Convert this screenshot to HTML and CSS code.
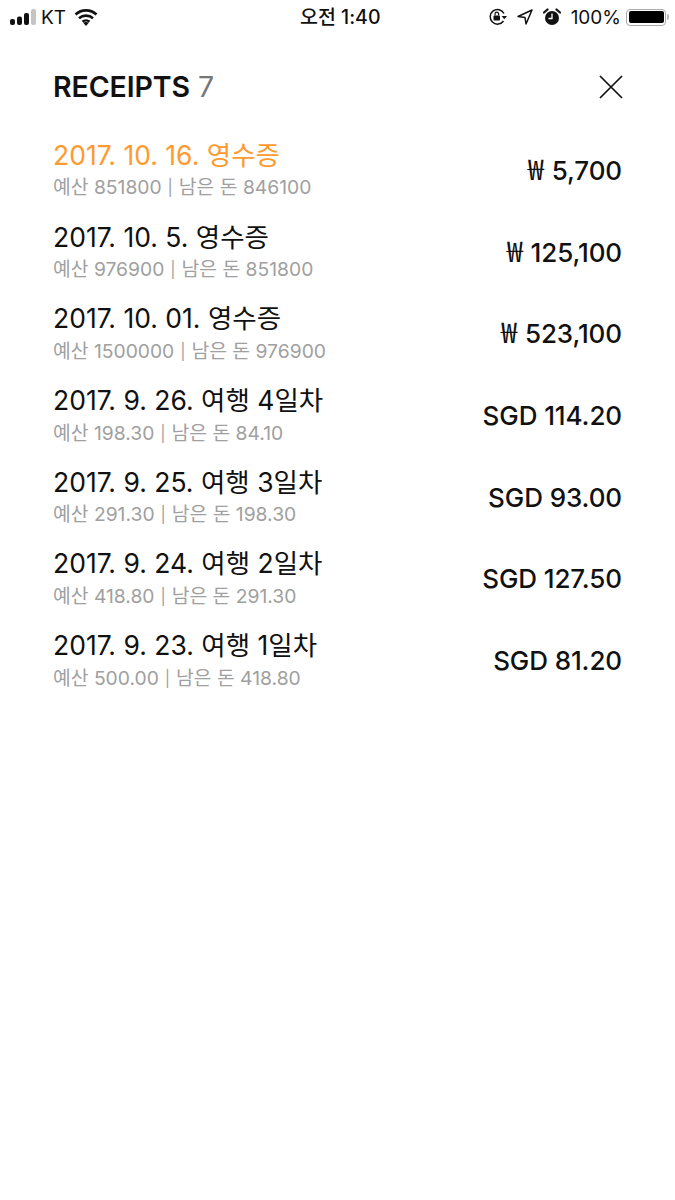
FILE: index.html
```html
<!DOCTYPE html>
<html lang="ko">
<head>
<meta charset="utf-8">
<title>Receipts</title>
<link rel="stylesheet" href="styles.css">
</head>
<body>
<div class="status">
  <div class="st-left">
    <svg class="signal" width="26" height="16" viewBox="0 0 26 16"><rect x="0" y="10" width="5" height="6" rx="2" fill="#111"/><rect x="7" y="7.500" width="5" height="8.500" rx="2" fill="#111"/><rect x="14" y="4" width="5" height="12" rx="2" fill="#111"/><rect x="21" y="0" width="5" height="16" rx="2" fill="#c4c4c4"/></svg>
    <span class="carrier">KT</span>
    <svg class="wifi" width="24" height="18" viewBox="0 0 24 18"><path d="M1.500 6.500C7.500 1 16.500 1 22.500 6.500M5 10.200C9 6.700 15 6.700 19 10.200M8.500 13.700C10.500 12 13.500 12 15.500 13.700" fill="none" stroke="#111" stroke-width="2.600"/><path d="M12 18l-2.800-3.200c1.600-1.200 4-1.200 5.600 0z" fill="#111"/></svg>
  </div>
  <div class="st-time">오전 1:40</div>
  <div class="st-right">
    <svg class="lock" width="20" height="18" viewBox="0 0 20 18"><path d="M16 5.500A7.300 7.300 0 1 0 15.500 13" fill="none" stroke="#111" stroke-width="1.500"/><path d="M13.600 8h5.400l-2.700 3.300z" fill="#111"/><rect x="5.500" y="7.500" width="6.500" height="5" rx="1" fill="#111"/><path d="M7 7.500V6a1.800 1.800 0 0 1 3.600 0v1.500" fill="none" stroke="#111" stroke-width="1.200"/></svg>
    <svg class="arrow" width="16" height="16" viewBox="0 0 16 16"><path d="M15 1L1 7.500l7 1 1 6.500z" fill="none" stroke="#111" stroke-width="1.500" stroke-linejoin="round"/></svg>
    <svg class="alarm" width="18" height="18" viewBox="0 0 18 18"><circle cx="9" cy="10" r="7" fill="#111"/><path d="M9 5.500V10.500H5.500" fill="none" stroke="#fff" stroke-width="1.300"/><path d="M1 4.500L4.500 1.500M17 4.500L13.500 1.500" stroke="#111" stroke-width="2.200" stroke-linecap="round"/></svg>
    <span class="pct">100%</span>
    <div class="battery"><div class="battery-fill"></div></div>
    <div class="battery-nub"></div>
  </div>
</div>

<div class="header">
  <h1 class="title">RECEIPTS <span class="count">7</span></h1>
  <svg class="close" width="24" height="24" viewBox="0 0 24 24"><path d="M1 1L23 23M23 1L1 23" stroke="#111" stroke-width="1.700"/></svg>
</div>

<div class="list">
  <div class="row">
    <div class="info"><div class="name active">2017. 10. 16. 영수증</div><div class="sub">예산 851800 <span class="pipe">|</span> 남은 돈 846100</div></div>
    <div class="amount"><span class="won">₩</span> 5,700</div>
  </div>
  <div class="row">
    <div class="info"><div class="name">2017. 10. 5. 영수증</div><div class="sub">예산 976900 <span class="pipe">|</span> 남은 돈 851800</div></div>
    <div class="amount"><span class="won">₩</span> 125,100</div>
  </div>
  <div class="row">
    <div class="info"><div class="name">2017. 10. 01. 영수증</div><div class="sub">예산 1500000 <span class="pipe">|</span> 남은 돈 976900</div></div>
    <div class="amount"><span class="won">₩</span> 523,100</div>
  </div>
  <div class="row">
    <div class="info"><div class="name">2017. 9. 26. 여행 4일차</div><div class="sub">예산 198.30 <span class="pipe">|</span> 남은 돈 84.10</div></div>
    <div class="amount">SGD 114.20</div>
  </div>
  <div class="row">
    <div class="info"><div class="name">2017. 9. 25. 여행 3일차</div><div class="sub">예산 291.30 <span class="pipe">|</span> 남은 돈 198.30</div></div>
    <div class="amount">SGD 93.00</div>
  </div>
  <div class="row">
    <div class="info"><div class="name">2017. 9. 24. 여행 2일차</div><div class="sub">예산 418.80 <span class="pipe">|</span> 남은 돈 291.30</div></div>
    <div class="amount">SGD 127.50</div>
  </div>
  <div class="row">
    <div class="info"><div class="name">2017. 9. 23. 여행 1일차</div><div class="sub">예산 500.00 <span class="pipe">|</span> 남은 돈 418.80</div></div>
    <div class="amount">SGD 81.20</div>
  </div>
</div>
</body>
</html>
```
FILE: styles.css
```css
* { box-sizing: border-box; }
html, body { margin: 0; padding: 0; background: #fff; }
body {
  width: 675px;
  height: 1200px;
  overflow: hidden;
  font-family: Inter, "Noto Sans CJK KR", sans-serif;
  color: #111;
}
.status {
  height: 34px;
  padding: 0 6px 0 10px;
  display: flex;
  align-items: center;
  justify-content: space-between;
  font-size: 19px;
  position: relative;
}
.st-left, .st-right { display: flex; align-items: center; }
.carrier { margin-left: 5px; font-weight: 400; }
.wifi { margin-left: 8px; }
.st-time {
  position: absolute;
  left: 300px;
  top: 5px;
  font-size: 19.500px;
  font-weight: 500;
  line-height: 24px;
}
.arrow { margin-left: 9px; }
.alarm { margin-left: 10px; }
.pct { margin-left: 10px; }
.battery {
  margin-left: 5px;
  width: 40px;
  height: 17px;
  border: 1.500px solid #aaa;
  border-radius: 4px;
  padding: 1.500px;
}
.battery-fill { width: 100%; height: 100%; background: #000; border-radius: 2px; }
.battery-nub { width: 2px; height: 6px; background: #bbb; margin-left: 1px; border-radius: 0 2px 2px 0; }
.header {
  margin-top: 31px;
  padding: 0 52px 0 53px;
  height: 44px;
  display: flex;
  align-items: center;
  justify-content: space-between;
}
.title { margin: 0; font-size: 28.500px; font-weight: 600; letter-spacing: -0.100px; word-spacing: 1px; line-height: 44px; color: #111; }
.count { font-weight: 400; color: #777; }
.list { margin-top: 21px; padding: 0 53px; display: flex; flex-direction: column; }
.row {
  height: 81.700px;
  display: flex;
  align-items: center;
  justify-content: space-between;
}
.info { padding-bottom: 4.400px; }
.name { font-size: 26.500px; line-height: 34px; color: #111; letter-spacing: 0; }
.name.active { color: #ff9a2e; }
.sub { font-size: 19.300px; line-height: 22px; margin-top: 4.600px; color: #a0a0a0; }
.pipe { font-size: 16px; padding: 0 0.500px; position: relative; top: -1px; }
.amount { font-size: 26px; line-height: 32px; font-weight: 450; color: #111; letter-spacing: -0.100px; }
.won {
  display: inline-block;
  font-family: "Noto Sans CJK KR", sans-serif;
  font-size: 29px;
  font-weight: 400;
  line-height: 20px;
  margin-right: 1px;
}
```
